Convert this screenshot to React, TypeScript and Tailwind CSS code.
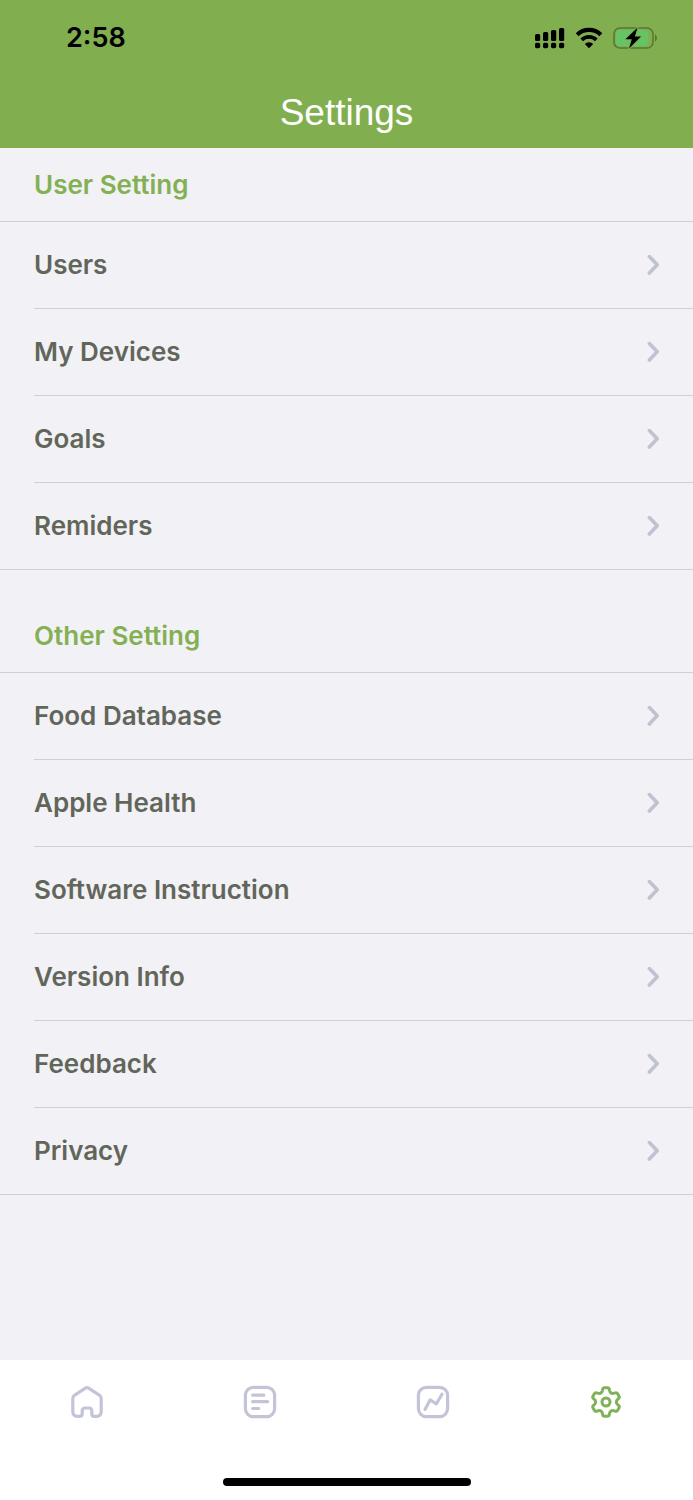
import React, { useState } from 'react';

type TabId = 'home' | 'records' | 'trends' | 'settings';

const sections = [
  {
    title: 'User Setting',
    items: ['Users', 'My Devices', 'Goals', 'Remiders'],
  },
  {
    title: 'Other Setting',
    items: [
      'Food Database',
      'Apple Health',
      'Software Instruction',
      'Version Info',
      'Feedback',
      'Privacy',
    ],
  },
];

const SignalIcon: React.FC = () => (
  <svg width="30" height="22" viewBox="0 0 30 22" fill="currentColor" aria-hidden="true">
    <rect x="0" y="7" width="5.2" height="7" rx="1.6" />
    <rect x="8" y="5" width="5.2" height="9" rx="1.6" />
    <rect x="16" y="3" width="5.2" height="11" rx="1.6" />
    <rect x="24" y="1" width="5.2" height="13" rx="1.6" />
    <rect x="0" y="15.8" width="5.2" height="5.4" rx="1.6" />
    <rect x="8" y="15.8" width="5.2" height="5.4" rx="1.6" />
    <rect x="16" y="15.8" width="5.2" height="5.4" rx="1.6" />
    <rect x="24" y="15.8" width="5.2" height="5.4" rx="1.6" />
  </svg>
);

const WifiIcon: React.FC = () => (
  <svg width="28" height="22" viewBox="0 0 28 22" fill="none" aria-hidden="true">
    <path d="M2.2 7.7a17 17 0 0 1 23.6 0" stroke="currentColor" strokeWidth="4.2" />
    <path d="M6.7 12.8a10.5 10.5 0 0 1 14.6 0" stroke="currentColor" strokeWidth="3.9" />
    <path d="M14 21.2l-4.2-4.3a5.9 5.9 0 0 1 8.4 0z" fill="currentColor" />
  </svg>
);

const BatteryIcon: React.FC = () => (
  <svg width="45" height="22" viewBox="0 0 45 22" aria-hidden="true">
    <rect x="1" y="1" width="39" height="20" rx="6" fill="none" stroke="#567834" strokeWidth="1.6" />
    <path d="M42 7.5c2.6 1.2 2.6 5.8 0 7z" fill="#567834" />
    <rect x="3" y="3" width="32" height="16" rx="4" fill="#65c466" />
    <path
      d="M24.6 0.6L12.5 12.2h6.3l-2.8 9.2L28 9.6h-6.2z"
      fill="#000"
      stroke="#81ae4f"
      strokeWidth="2"
      strokeLinejoin="round"
      paintOrder="stroke"
    />
  </svg>
);

const ChevronIcon: React.FC = () => (
  <svg width="14" height="22" viewBox="0 0 14 22" fill="none" aria-hidden="true">
    <path
      d="M2.4 2.6l7.8 8.2-7.8 8.2"
      stroke="#c0c2d1"
      strokeWidth="3.6"
      strokeLinecap="round"
      strokeLinejoin="round"
    />
  </svg>
);

const HomeIcon: React.FC = () => (
  <svg width="36" height="36" viewBox="0 0 36 36" fill="none" stroke="currentColor" strokeWidth="3.2" strokeLinejoin="round" aria-hidden="true">
    <path d="M16.4 4.2L5.4 11.3Q3.8 12.4 3.8 14.4V27.5Q3.8 32.4 8.6 32.4H10.6Q13.2 32.4 13.2 29.8V27Q13.2 24 16 24H20Q22.8 24 22.8 27V29.8Q22.8 32.4 25.4 32.4H27.4Q32.2 32.4 32.2 27.5V14.4Q32.2 12.4 30.6 11.3L19.6 4.2Q18 3.2 16.4 4.2Z" />
  </svg>
);

const RecordsIcon: React.FC = () => (
  <svg width="36" height="36" viewBox="0 0 36 36" fill="none" stroke="currentColor" strokeWidth="3.2" strokeLinecap="round" aria-hidden="true">
    <rect x="3.4" y="3.4" width="29.2" height="29.2" rx="8" />
    <path d="M10.6 11.2h11.2M10.6 17.7h15M10.6 24.5h6.2" />
  </svg>
);

const TrendsIcon: React.FC = () => (
  <svg width="36" height="36" viewBox="0 0 36 36" fill="none" stroke="currentColor" strokeWidth="3.2" strokeLinecap="round" strokeLinejoin="round" aria-hidden="true">
    <rect x="3.4" y="3.4" width="29.2" height="29.2" rx="8" />
    <path d="M10 25.4l5.2-9.6 6.2 4 5.6-9.6" />
  </svg>
);

const SettingsIcon: React.FC = () => (
  <svg width="36" height="36" viewBox="0 0 36 36" fill="none" stroke="currentColor" strokeWidth="3" strokeLinecap="round" aria-hidden="true">
    <g transform="translate(18 18)">
      {[0, 60, 120, 180, 240, 300].map(angle => (
        <path
          key={angle}
          transform={`rotate(${angle})`}
          d="M-5.2-9C-3.9-9.75-3.6-10.6-3.5-11.6C-3.4-13.6-2.6-14.2-1.3-14.2H1.3C2.6-14.2 3.4-13.6 3.5-11.6C3.6-10.6 3.9-9.75 5.2-9"
        />
      ))}
      <circle r="4" />
    </g>
  </svg>
);

const tabs: { id: TabId; label: string; icon: React.ReactNode }[] = [
  { id: 'home', label: 'Home', icon: <HomeIcon /> },
  { id: 'records', label: 'Records', icon: <RecordsIcon /> },
  { id: 'trends', label: 'Trends', icon: <TrendsIcon /> },
  { id: 'settings', label: 'Settings', icon: <SettingsIcon /> },
];

export default function App() {
  const [activeTab, setActiveTab] = useState<TabId>('settings');

  return (
    <div className="flex min-h-screen flex-col bg-[#f1f1f6] font-['Inter',sans-serif]">
      {/* Header */}
      <header className="bg-[#81ae4f]">
        <div className="flex items-center justify-between pt-5 pr-[35px] pl-[66px] text-black">
          <span className="text-[27px] leading-9 font-semibold">2:58</span>
          <div className="flex items-center gap-[10px]">
            <SignalIcon />
            <WifiIcon />
            <BatteryIcon />
          </div>
        </div>
        <h1 className="pt-[33px] pb-[11px] text-center font-['Liberation_Sans',sans-serif] text-[37px] leading-12 text-white">
          Settings
        </h1>
      </header>

      {/* Content */}
      <main className="flex flex-1 flex-col gap-[29px]">
        {sections.map(section => (
          <section key={section.title}>
            <h2 className="px-[34px] pt-[19px] pb-[18px] text-[26px] leading-9 font-semibold text-[#84b054]">
              {section.title}
            </h2>
            <ul className="border-y border-[#d0d0d6] pl-[34px]">
              {section.items.map(item => (
                <li key={item} className="border-t border-[#d0d0d6] first:border-t-0">
                  <button
                    type="button"
                    className="flex w-full items-center justify-between py-[25px] pr-8 text-left text-[26px] leading-9 font-semibold text-[#62665a]"
                  >
                    {item}
                    <ChevronIcon />
                  </button>
                </li>
              ))}
            </ul>
          </section>
        ))}
      </main>

      {/* Tab bar */}
      <footer className="bg-white pt-6 pb-[14px]">
        <nav className="grid grid-cols-4">
          {tabs.map(tab => (
            <button
              key={tab.id}
              type="button"
              aria-label={tab.label}
              onClick={() => setActiveTab(tab.id)}
              className={`flex justify-center ${
                activeTab === tab.id ? 'text-[#7fb256]' : 'text-[#c4c4d8]'
              }`}
            >
              {tab.icon}
            </button>
          ))}
        </nav>
        <div className="mx-auto mt-[58px] h-2 w-[248px] rounded-full bg-black" />
      </footer>
    </div>
  );
}
